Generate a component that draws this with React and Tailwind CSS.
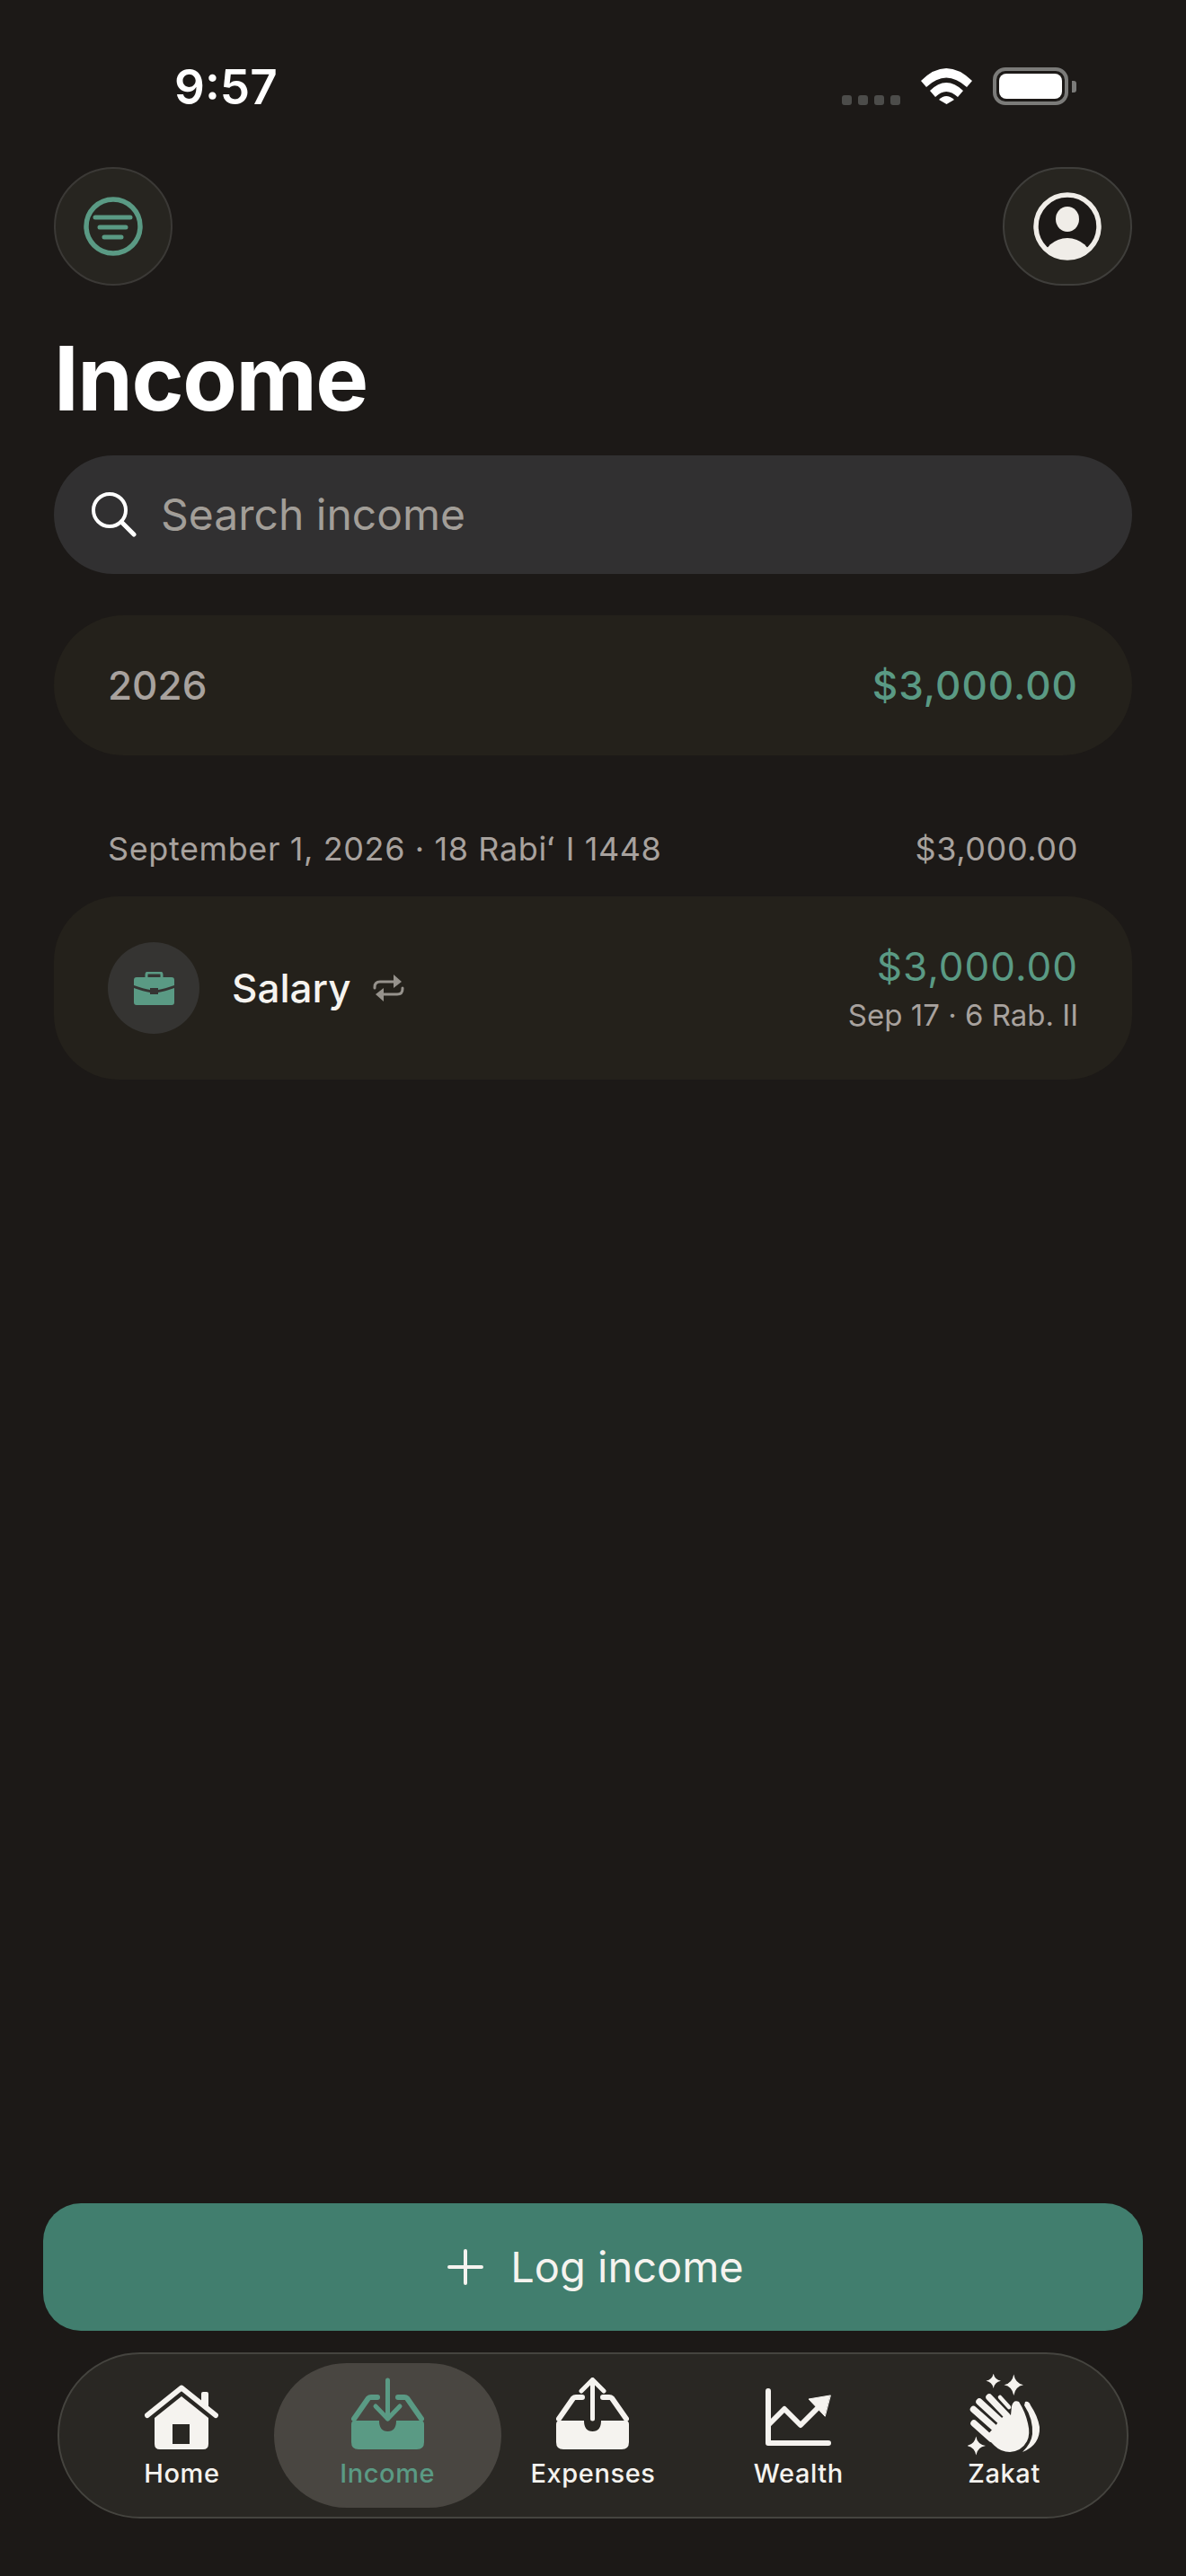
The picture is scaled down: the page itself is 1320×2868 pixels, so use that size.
import React from 'react';

const Cell = ({ label, active, children }) => (
  <div className={`flex flex-col items-center ${active ? '-mx-[12px] rounded-[81px] bg-[#494641] text-[#5a9a84]' : 'text-[#f5f3ef]'}`}>
    <div className="flex h-[105px] items-end">{children}</div>
    <span className="text-[29px] leading-[36px] tracking-[0.6px] font-medium">{label}</span>
  </div>
);

const Tray = ({ up }) => (
  <svg viewBox="0 0 81 80" className="mb-[9px] h-[80px] w-[81px]" fill="none" stroke="currentColor" strokeLinecap="round" strokeLinejoin="round">
    <path d="M3 46 L19 23 Q20 22 22 22 H29 M52 22 H59 Q61 22 62 23 L78 46" strokeWidth="6" />
    <path d="M0 52 Q0 48 4 48 H31 Q31 60 40.5 60 Q50 60 50 48 H77 Q81 48 81 52 V72 Q81 80 73 80 H8 Q0 80 0 72 Z" fill="currentColor" stroke="none" />
    {up ? (
      <path d="M40.5 46 V2.5 M28 15 L40.5 2.5 L53 15" strokeWidth="5" />
    ) : (
      <path d="M40.5 3 V46 M27 32 L40.5 46 L54 32" strokeWidth="5" />
    )}
  </svg>
);

const HomeIcon = () => (
  <svg viewBox="0 0 82 72" className="mb-[9px] h-[72px] w-[82px]" fill="currentColor">
    <path d="M41 13 L71 37 V66 Q71 72 65 72 H17 Q11 72 11 66 V37 Z M31 44 V66 H50 V44 Z" fillRule="evenodd" />
    <path d="M63 10 Q63 8 65 8 H69 Q71 8 71 10 V28 L63 22 Z" />
    <path d="M3 34 L41 3.5 L79 34" fill="none" stroke="currentColor" strokeWidth="6" strokeLinecap="round" strokeLinejoin="round" />
  </svg>
);

const WealthIcon = () => (
  <svg viewBox="0 0 73 64" className="mb-[13px] h-[64px] w-[73px]" fill="none" stroke="currentColor" strokeLinecap="round" strokeLinejoin="round">
    <path d="M3 3 V61 H70" strokeWidth="6" />
    <path d="M4 40 L21 23 L39 41 L58 22" strokeWidth="6" />
    <path d="M72 8 L48 12 L66 31 Z" fill="currentColor" stroke="currentColor" strokeWidth="1" />
  </svg>
);

const ZakatIcon = () => (
  <svg viewBox="8 5 81 91" className="mb-[2px] h-[91px] w-[81px]" fill="currentColor" stroke="none">
    <path d="M36.7 4.5 Q38 11.5 45 12.7 Q38 14 36.7 21 Q35.4 14 28.5 12.7 Q35.4 11.5 36.7 4.5 Z" />
    <path d="M59.3 5.5 Q61 15.5 70 17.3 Q61 19 59.3 29 Q57.6 19 48.5 17.3 Q57.6 15.5 59.3 5.5 Z" />
    <path d="M17.3 74.5 Q18.8 83.5 28 85 Q18.8 86.5 17.3 95.5 Q15.8 86.5 7 85 Q15.8 83.5 17.3 74.5 Z" />
    <g fill="none" stroke="currentColor" strokeLinecap="round">
      <path d="M15 60 L34 77" strokeWidth="7.5" />
      <path d="M14.5 44.5 L40 67" strokeWidth="7.5" />
      <path d="M21 36 L46 59" strokeWidth="7.5" />
      <path d="M32 31 L52 52" strokeWidth="7.5" />
      <path d="M44 31 L54 42" strokeWidth="4.5" />
    </g>
    <path d="M57 41 Q59 33 65 36 Q72 47 75 60 Q78 72 74 80 Q68 91 55 92 Q45 92 38 85 L28 75 L38 64 L44 56 L50 50 L56 51 Z" />
    <path d="M72 36 Q76 35 78 40 Q86 52 88 64 Q89 84 69 92 Q79 82 80 72 Q81 55 71 40 Z" />
  </svg>
);

export default function App() {
  return (
    <div className="flex h-[2868px] w-[1320px] flex-col overflow-hidden bg-[#1c1917] font-['Inter',sans-serif] text-white">
      {/* status bar */}
      <div className="flex h-[186px] shrink-0 items-start justify-between pl-[194px] pr-[131px] pt-[66px]">
        <span className="text-[53px] leading-[62px] font-semibold">9:57</span>
        <div className="mt-[9px] flex h-[42px] items-end">
          <div className="flex gap-[7px] pb-0">
            <span className="h-[11px] w-[11px] rounded-[3px] bg-[#4c4c4a]" />
            <span className="h-[11px] w-[11px] rounded-[3px] bg-[#4c4c4a]" />
            <span className="h-[11px] w-[11px] rounded-[3px] bg-[#4c4c4a]" />
            <span className="h-[11px] w-[11px] rounded-[3px] bg-[#4c4c4a]" />
          </div>
          <svg viewBox="0 0 57 42" className="ml-[23px] h-[42px] w-[57px]" fill="white">
            <path d="M0 15 Q28 -13 57 15 L51 22 Q28 1 6 22 Z" />
            <path d="M10 26 Q28 8 47 26 L41 33 Q28 21 16 33 Z" />
            <path d="M20 37 Q28 29 37 37 L28.5 42 Z" transform="translate(0 -1)" />
          </svg>
          <div className="relative ml-[23px] h-[42px] w-[84px] rounded-[14px] border-[4px] border-[#7b7b79] p-[3px]">
            <div className="h-full w-full rounded-[8px] bg-white" />
            <span className="absolute -right-[13px] top-[11px] h-[13px] w-[5px] rounded-r-[3px] bg-[#7b7b79]" />
          </div>
        </div>
      </div>

      <div className="flex min-h-0 flex-1 flex-col px-[60px]">
        {/* header buttons */}
        <div className="flex h-[132px] shrink-0 justify-between">
          <div className="flex h-[132px] w-[132px] items-center justify-center rounded-full border-2 border-[#3b3936] bg-[#272520]">
            <svg viewBox="0 0 66 66" className="h-[66px] w-[66px]" fill="none" stroke="#5a9a84" strokeLinecap="round">
              <circle cx="33" cy="33" r="30" strokeWidth="5.5" />
              <path d="M13 23 H52 M18 34 H47 M23 45 H42" strokeWidth="5" />
            </svg>
          </div>
          <div className="flex h-[132px] w-[144px] items-center justify-center rounded-full border-2 border-[#3f3e3b] bg-[#272520]">
            <svg viewBox="0 0 76 76" className="h-[76px] w-[76px]">
              <defs>
                <clipPath id="ring"><circle cx="38" cy="38" r="35" /></clipPath>
              </defs>
              <circle cx="38" cy="38" r="35" fill="#1c1917" stroke="#f0ede8" strokeWidth="5.5" />
              <ellipse cx="38" cy="30" rx="13" ry="14" fill="#f0ede8" />
              <ellipse cx="38" cy="76" rx="27" ry="25" fill="#f0ede8" clipPath="url(#ring)" />
            </svg>
          </div>
        </div>

        <h1 className="mt-[43px] text-[99px] leading-[120px] font-bold tracking-[-1.5px]">Income</h1>

        {/* search */}
        <div className="mt-[26px] flex h-[132px] shrink-0 items-center rounded-full bg-[#313031] pl-[42px]">
          <svg viewBox="0 0 50 50" className="h-[50px] w-[50px]" fill="none" stroke="#ffffff" strokeLinecap="round">
            <circle cx="20" cy="20" r="18" strokeWidth="4" />
            <path d="M33 33 L47 47" strokeWidth="5" />
          </svg>
          <span className="ml-[27px] text-[48px] leading-[60px] text-[#a29e98]">Search income</span>
        </div>

        {/* year total */}
        <div className="mt-[46px] flex h-[156px] shrink-0 items-center justify-between rounded-[78px] bg-[#24211b] px-[60px] text-[44px] leading-[52px] font-medium">
          <span className="text-[#a8a29e]">2026</span>
          <span className="tracking-[1px] text-[#5a9a84]">$3,000.00</span>
        </div>

        {/* date group */}
        <div className="mt-[82px] flex shrink-0 items-center justify-between px-[60px] text-[36px] leading-[44px] tracking-[0.6px] text-[#a8a29e]">
          <span>September 1, 2026 · 18 Rabiʻ I 1448</span>
          <span>$3,000.00</span>
        </div>

        {/* income row */}
        <div className="mt-[31px] flex h-[204px] shrink-0 items-center rounded-[72px] bg-[#24211b] px-[60px]">
          <div className="flex h-[102px] w-[102px] items-center justify-center rounded-full bg-[#353432]">
            <svg viewBox="0 0 45 37" className="h-[37px] w-[45px]">
              <path d="M14 7 V3 Q14 1 16 1 H29 Q31 1 31 3 V7" fill="none" stroke="#5a9a84" strokeWidth="3" />
              <path d="M0 9 Q0 6 3 6 H42 Q45 6 45 9 V15 Q34 19 27 20 V18 H18 V20 Q11 19 0 15 Z" fill="#5a9a84" />
              <path d="M0 18 Q11 22 18 23 V25 H27 V23 Q34 22 45 18 V34 Q45 37 42 37 H3 Q0 37 0 34 Z" fill="#5a9a84" />
            </svg>
          </div>
          <span className="ml-[36px] text-[44px] leading-[52px] font-medium text-[#f5f3ef]">Salary</span>
          <svg viewBox="0 0 35 30" className="ml-[24px] h-[30px] w-[35px]" fill="none" stroke="#96928c" strokeWidth="3" strokeLinecap="round" strokeLinejoin="round">
            <path d="M2 15 V14 Q2 8 8 8 H26" />
            <path d="M23 0 L32 8 L23 15 Z" fill="#96928c" stroke="none" />
            <path d="M33 15 V16 Q33 22 27 22 H9" />
            <path d="M12 15 L3 22 L12 30 Z" fill="#96928c" stroke="none" />
          </svg>
          <div className="ml-auto flex flex-col items-end">
            <span className="text-[44px] leading-[52px] tracking-[1px] text-[#5a9a84]">$3,000.00</span>
            <span className="mt-[8px] text-[33px] leading-[40px] text-[#a8a29e]">Sep 17 · 6 Rab. II</span>
          </div>
        </div>
      </div>

      {/* bottom actions */}
      <div className="flex shrink-0 flex-col px-[48px]">
        <button className="flex h-[142px] items-center justify-center rounded-[42px] bg-[#417e6e] pl-[6px] text-[#f5f3ef]">
          <svg viewBox="0 0 40 40" className="h-[40px] w-[40px]" fill="none" stroke="currentColor" strokeWidth="4" strokeLinecap="round">
            <path d="M20 2 V38 M2 20 H38" />
          </svg>
          <span className="ml-[30px] text-[47px] leading-[58px]">Log income</span>
        </button>
        <nav className="mx-[16px] mt-[24px] mb-[64px] grid h-[185px] grid-cols-5 rounded-[92px] border-2 border-[#45443f] bg-[#292723] px-[22px] py-[10px]">
          <Cell label="Home"><HomeIcon /></Cell>
          <Cell label="Income" active><Tray /></Cell>
          <Cell label="Expenses"><Tray up /></Cell>
          <Cell label="Wealth"><WealthIcon /></Cell>
          <Cell label="Zakat"><ZakatIcon /></Cell>
        </nav>
      </div>
    </div>
  );
}
